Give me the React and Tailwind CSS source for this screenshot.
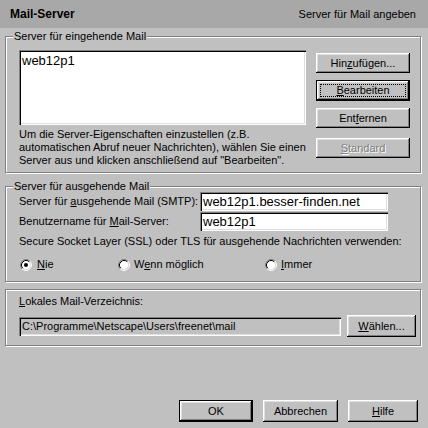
const raised =
  "shadow-[inset_-1px_-1px_0_#000,inset_1px_1px_0_#fff,inset_-2px_-2px_0_#808080,inset_2px_2px_0_#dfdfdf]";
const sunken =
  "shadow-[inset_1px_1px_0_#808080,inset_2px_2px_0_#000,inset_-1px_-1px_0_#fff,inset_-2px_-2px_0_#dfdfdf]";
const etched =
  "border border-[#808080] shadow-[inset_1px_1px_0_#fff,1px_1px_0_#fff]";

function Btn({ children, className = "", isDefault, focus, disabled }) {
  return (
    <div
      className={`relative bg-[#c0c0c0] flex items-center justify-center ${
        isDefault ? "border border-black" : ""
      } ${className}`}
    >
      <div className={`absolute inset-0 ${raised}`} />
      {focus && (
        <div className="absolute inset-[3px] border border-dotted border-black" />
      )}
      <span
        className={`relative ${
          disabled ? "text-[#808080] [text-shadow:1px_1px_0_#fff]" : ""
        }`}
      >
        {children}
      </span>
    </div>
  );
}

function Group({ title, className = "", children }) {
  return (
    <div className={`relative ${etched} ${className}`}>
      {title && (
        <span className="absolute left-[7px] -top-[7px] bg-[#c0c0c0] px-[1px] leading-[13px]">
          {title}
        </span>
      )}
      {children}
    </div>
  );
}

function Radio({ checked }) {
  return (
    <svg width="12" height="12" viewBox="0 0 12 12" className="shrink-0">
      <circle cx="6" cy="6" r="4.5" fill="#fff" />
      <path d="M2.11 9.89A5.5 5.5 0 0 1 9.89 2.11" stroke="#808080" fill="none" />
      <path d="M2.82 9.18A4.5 4.5 0 0 1 9.18 2.82" stroke="#000" fill="none" />
      <path d="M9.89 2.11A5.5 5.5 0 0 1 2.11 9.89" stroke="#fff" fill="none" />
      <path d="M9.18 2.82A4.5 4.5 0 0 1 2.82 9.18" stroke="#dfdfdf" fill="none" />
      {checked && <circle cx="6" cy="6" r="2" fill="#000" />}
    </svg>
  );
}

export default function App() {
  return (
    <div className="w-[428px] h-[428px] bg-[#c0c0c0] text-black text-[11px] leading-[13px] font-['Liberation_Sans',Arial,sans-serif] flex flex-col overflow-hidden">
      <div className="h-[28px] shrink-0 bg-[#a8a8a8] flex items-center justify-between pl-[10px] pr-[12px]">
        <span className="font-bold text-[12px]">Mail-Server</span>
        <span className="text-[11px]">Server für Mail angeben</span>
      </div>

      <Group
        title="Server für eingehende Mail"
        className="mt-[8px] ml-[5px] w-[416px] h-[137px] shrink-0"
      >
        <div className="flex pl-[13px] pt-[13px]">
          <div className="w-[287px]">
            <div className={`h-[75px] bg-white ${sunken} px-[3px] pt-[3px] text-[13px] leading-[15px]`}>
              web12p1
            </div>
            <p className="mt-[3px] whitespace-nowrap">
              Um die Server-Eigenschaften einzustellen (z.B.
              <br />
              automatischen Abruf neuer Nachrichten), wählen Sie einen
              <br />
              Server aus und klicken anschließend auf "Bearbeiten".
            </p>
          </div>
          <div className="ml-[10px] w-[94px] flex flex-col">
            <Btn className="mt-[3px] h-[20px]">
              Hin<span className="underline">z</span>ufügen...
            </Btn>
            <Btn className="mt-[7px] h-[21px]" isDefault focus>
              <span className="underline">B</span>earbeiten
            </Btn>
            <Btn className="mt-[7px] h-[20px]">
              Ent<span className="underline">f</span>ernen
            </Btn>
            <Btn className="mt-[10px] h-[20px]" disabled>
              <span className="underline">S</span>tandard
            </Btn>
          </div>
        </div>
      </Group>

      <Group
        title="Server für ausgehende Mail"
        className="mt-[13px] ml-[5px] w-[416px] h-[96px] shrink-0"
      >
        <div className="pl-[13px] pt-[5px]">
          <div className="flex items-center h-[19px]">
            <span className="w-[181px]">
              Server für <span className="underline">a</span>usgehende Mail (SMTP):
            </span>
            <div className={`w-[188px] h-[19px] bg-white ${sunken} px-[3px] text-[13px] leading-[19px]`}>
              web12p1.besser-finden.net
            </div>
          </div>
          <div className="flex items-center h-[19px] mt-[1px]">
            <span className="w-[181px]">
              Benutzername für <span className="underline">M</span>ail-Server:
            </span>
            <div className={`w-[188px] h-[19px] bg-white ${sunken} px-[3px] text-[13px] leading-[19px]`}>
              web12p1
            </div>
          </div>
          <p className="mt-[4px]">
            Secure Socket Layer (SSL) oder TLS für ausgehende Nachrichten verwenden:
          </p>
          <div className="flex items-center mt-[10px] ml-[1px]">
            <div className="w-[98px] flex items-center gap-[5px]">
              <Radio checked />
              <span className="underline">N</span>
              <span className="-ml-[5px]">ie</span>
            </div>
            <div className="w-[147px] flex items-center gap-[4px]">
              <Radio />
              <span>
                W<span className="underline">e</span>nn möglich
              </span>
            </div>
            <div className="flex items-center gap-[4px]">
              <Radio />
              <span>
                <span className="underline">I</span>mmer
              </span>
            </div>
          </div>
        </div>
      </Group>

      <Group className="mt-[7px] ml-[5px] w-[416px] h-[57px] shrink-0">
        <div className="pl-[13px] pt-[5px]">
          <p>
            <span className="underline">L</span>okales Mail-Verzeichnis:
          </p>
          <div className="flex items-center mt-[7px]">
            <div className={`w-[322px] h-[19px] ${sunken} px-[3px] leading-[19px]`}>
              C:\Programme\Netscape\Users\freenet\mail
            </div>
            <Btn className="ml-[6px] w-[69px] h-[22px]">
              <span className="underline">W</span>ählen...
            </Btn>
          </div>
        </div>
      </Group>

      <div className="mt-auto pb-[6px] pr-[10px] flex justify-end gap-[10px]">
        <Btn className="w-[74px] h-[22px]" isDefault>
          OK
        </Btn>
        <Btn className="w-[75px] h-[22px]">Abbrechen</Btn>
        <Btn className="w-[70px] h-[22px]">
          <span className="underline">H</span>ilfe
        </Btn>
      </div>
    </div>
  );
}
